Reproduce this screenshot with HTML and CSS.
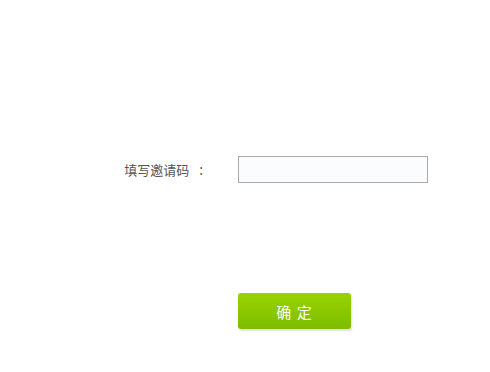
FILE: index.html
```html
<!DOCTYPE html>
<html>
<head>
<meta charset="utf-8">
<link rel="stylesheet" href="styles.css">
</head>
<body>
<div class="page">
  <div class="row">
    <label class="label" for="code">填写邀请码<span class="colon">:</span></label>
    <input class="field" id="code" type="text">
  </div>
  <div class="actions">
    <button class="btn" type="button">确 定</button>
  </div>
</div>
</body>
</html>
```
FILE: styles.css
```css
html, body {
  margin: 0;
  padding: 0;
  background: #fff;
}
.page {
  width: 490px;
  height: 372px;
  padding-top: 156px;
  box-sizing: border-box;
  font-family: "Noto Sans CJK SC", "Liberation Sans", sans-serif;
}
.row {
  display: flex;
  align-items: center;
  height: 27px;
}
.label {
  width: 238px;
  box-sizing: border-box;
  padding-right: 35px;
  text-align: right;
  font-size: 13px;
  color: #555;
  line-height: 27px;
}
.colon {
  display: inline-block;
  margin-left: 10px;
  font-family: "Noto Sans", sans-serif;
  font-size: 14px;
}
.field {
  width: 190px;
  height: 27px;
  box-sizing: border-box;
  border: 1px solid #aaa;
  background: #fbfcfe;
  margin: 0;
  padding: 0 6px;
  outline: none;
}
.actions {
  padding-top: 110px;
  padding-left: 238px;
}
.btn {
  width: 113px;
  height: 36px;
  border: none;
  border-radius: 3px;
  background: linear-gradient(#98d300, #7dbc00);
  box-shadow: 1px 2px 2px rgba(0,0,0,0.12);
  color: #fff;
  font-family: "Noto Sans CJK SC", sans-serif;
  font-size: 15px;
  letter-spacing: 1px;
  padding: 0;
  margin: 0;
  display: block;
}
```
